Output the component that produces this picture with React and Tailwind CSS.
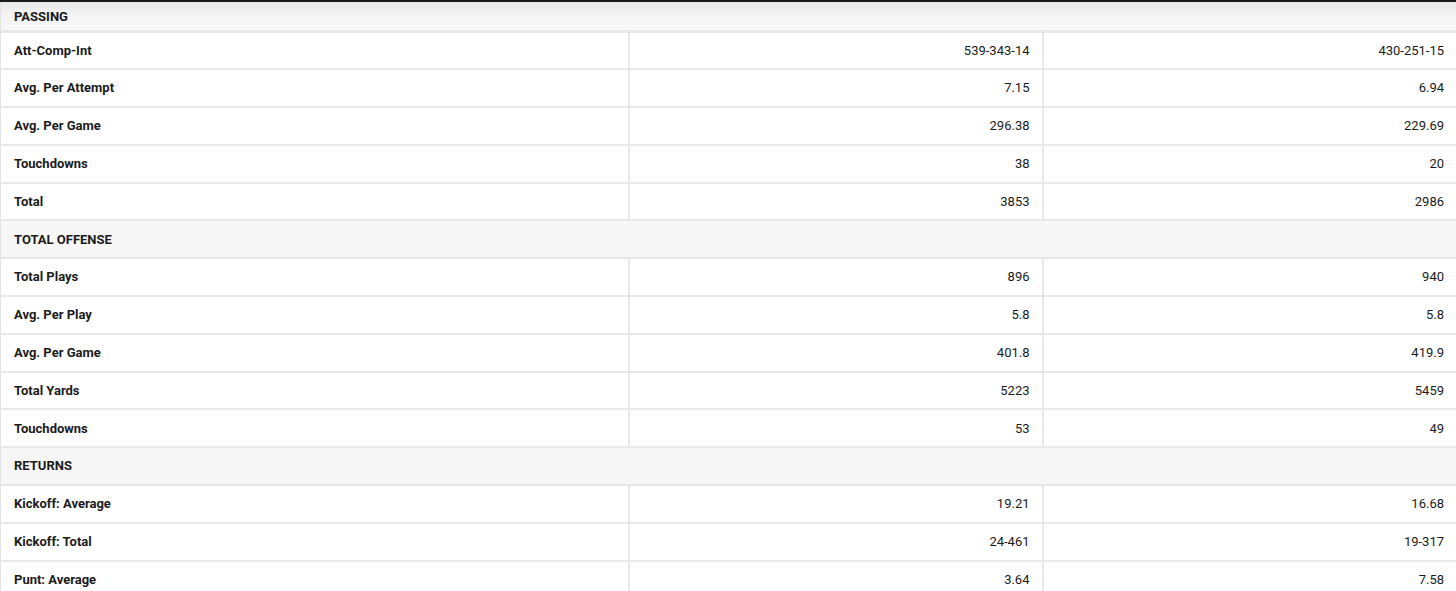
import React from "react";

const sections = [
  {
    title: "PASSING",
    rows: [
      ["Att-Comp-Int", "539-343-14", "430-251-15"],
      ["Avg. Per Attempt", "7.15", "6.94"],
      ["Avg. Per Game", "296.38", "229.69"],
      ["Touchdowns", "38", "20"],
      ["Total", "3853", "2986"],
    ],
  },
  {
    title: "TOTAL OFFENSE",
    rows: [
      ["Total Plays", "896", "940"],
      ["Avg. Per Play", "5.8", "5.8"],
      ["Avg. Per Game", "401.8", "419.9"],
      ["Total Yards", "5223", "5459"],
      ["Touchdowns", "53", "49"],
    ],
  },
  {
    title: "RETURNS",
    rows: [
      ["Kickoff: Average", "19.21", "16.68"],
      ["Kickoff: Total", "24-461", "19-317"],
      ["Punt: Average", "3.64", "7.58"],
    ],
  },
];

const App = () => {
  return (
    <div className="w-[1456px] h-[591px] overflow-hidden bg-white font-['Roboto',sans-serif] text-[13px] text-[#1b1b1b]">
      {/* top edge */}
      <div className="h-[2px] bg-[#1a1a1a]" />
      <table className="w-full border-collapse table-fixed border-l border-r border-[#e3e3e3]">
        <colgroup>
          <col className="w-[628px]" />
          <col className="w-[414px]" />
          <col className="w-[414px]" />
        </colgroup>
        <tbody>
          {sections.map((section, si) => (
            <React.Fragment key={section.title}>
              <tr
                className={
                  si === 0
                    ? "h-[29.5px] bg-gradient-to-b from-[#e9e9e9] via-[#f4f4f4] to-[#f8f8f8] border-b-2 border-[#e6e6e6]"
                    : "h-[37.8px] bg-[#f7f7f7] border-b-2 border-[#e6e6e6]"
                }
              >
                <td colSpan={3} className="px-[13px] font-bold align-middle">
                  {section.title}
                </td>
              </tr>
              {section.rows.map((row) => (
                <tr key={row[0]} className="h-[37.8px] border-b-2 border-[#e8e8e8]">
                  <td className="px-[13px] font-bold border-r-2 border-[#e8e8e8]">
                    {row[0]}
                  </td>
                  <td className="px-[12px] text-right border-r-2 border-[#e8e8e8]">
                    {row[1]}
                  </td>
                  <td className="px-[12px] text-right">{row[2]}</td>
                </tr>
              ))}
            </React.Fragment>
          ))}
        </tbody>
      </table>
    </div>
  );
};

export default App;
